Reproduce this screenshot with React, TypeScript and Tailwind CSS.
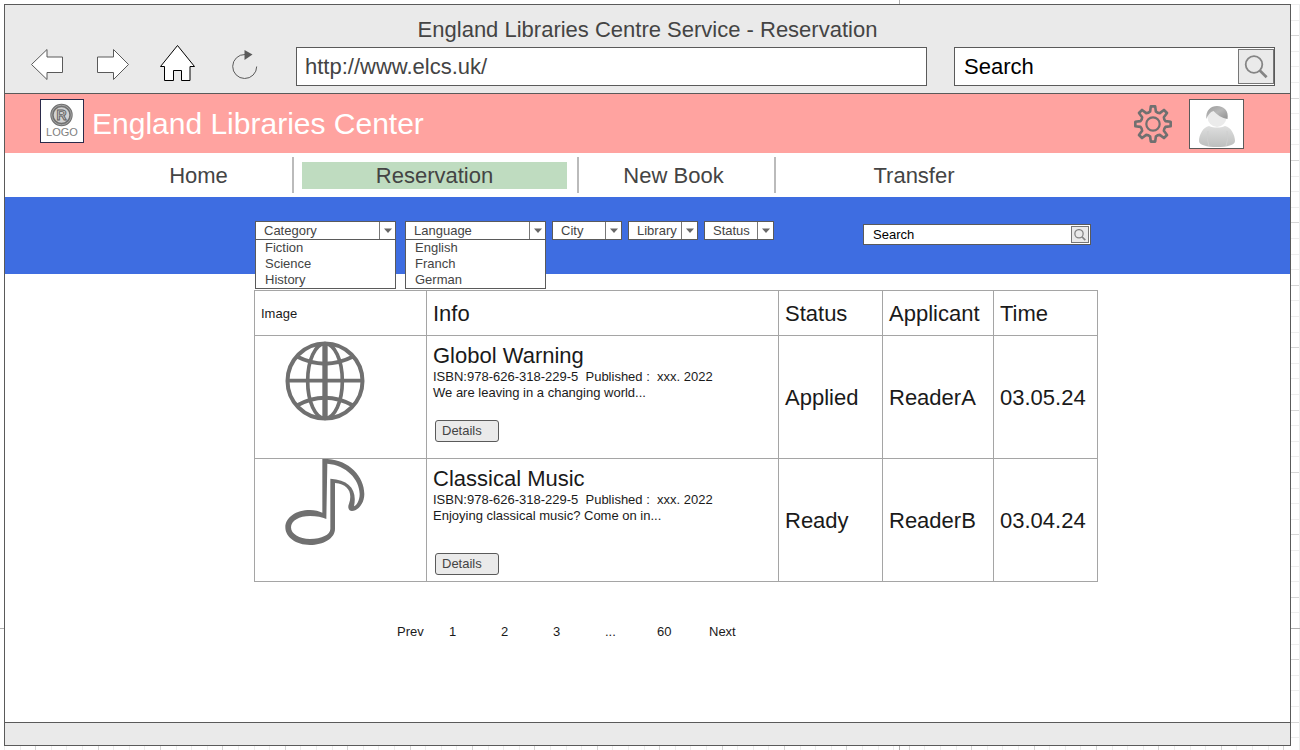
import React from "react";

const range = (n: number) => Array.from({ length: n }, (_, i) => i);

function GridBackdrop() {
  const step = 15.6;
  return (
    <svg className="absolute inset-0 -z-10 h-full w-full" aria-hidden="true" shapeRendering="crispEdges">
      {range(200).map((i) => {
        const at = Math.round(4 + i * step);
        const major = i % 4 === 2;
        const color = major ? "#d6d6d6" : "#ededed";
        return (
          <g key={i} fill={color}>
            <rect x="0" y={at} width="100%" height="1" />
            <rect x={at} y="0" width="1" height="100%" />
          </g>
        );
      })}
      <rect x="0" y="0" width="100%" height="4" fill="#fff" />
      <rect x="0" y="0" width="4" height="100%" fill="#fff" />
      <rect x="899" y="0" width="1" height="100%" fill="#b0b0b0" />
      <rect x="0" y="628" width="100%" height="1" fill="#b0b0b0" />
    </svg>
  );
}

function BackIcon() {
  return (
    <svg width="66" height="40" viewBox="15 47 66 40" fill="#fff" stroke="#5a5a5a" strokeWidth="1">
      <path d="M31.5 64.5 47 49.5V57H62.5V72.5H47V79.5Z" />
    </svg>
  );
}

function ForwardIcon() {
  return (
    <svg width="66" height="40" viewBox="81 47 66 40" fill="#fff" stroke="#5a5a5a" strokeWidth="1">
      <path d="M128.5 64.5 113.5 49.5V57H97.5V72.5H113.5V79.5Z" />
    </svg>
  );
}

function HomeIcon() {
  return (
    <svg width="66" height="40" viewBox="147 47 66 40" className="overflow-visible" fill="#fff" stroke="#000" strokeWidth="1">
      <path d="M177.5 45.5 194.5 66.5H190V80.5H181.5V70.5H173.5V80.5H164.5V66.5H160.5Z" />
    </svg>
  );
}

function ReloadIcon() {
  return (
    <svg width="66" height="40" viewBox="213 47 66 40" fill="none">
      <path d="M256.7 66.5A12 12 0 1 1 245 54.5" stroke="#5a5a5a" strokeWidth="1" />
      <path d="M244.5 50 252.5 54.5 244.5 60Z" fill="#5a5a5a" />
    </svg>
  );
}

function Magnifier({ className, weight = 1.5 }: { className: string; weight?: number }) {
  return (
    <svg className={className} viewBox="0 0 24 24" fill="none" stroke="#858585">
      <circle cx="10" cy="9.5" r="8.3" strokeWidth={weight} />
      <path d="M15.8 15.5 22.6 22.2" strokeWidth={weight + 0.9} />
    </svg>
  );
}

function Gear() {
  const point = (radius: number, degrees: number) => {
    const a = (degrees * Math.PI) / 180;
    return `${(20 + radius * Math.sin(a)).toFixed(2)} ${(20 - radius * Math.cos(a)).toFixed(2)}`;
  };
  const d = range(8)
    .map((i) => {
      const a = i * 45;
      return `${i ? "L" : "M"}${point(12.8, a - 13)}L${point(17.8, a - 7)}L${point(17.8, a + 7)}L${point(12.8, a + 13)}Q${point(11.8, a + 22.5)} ${point(12.8, a + 32)}`;
    })
    .join("");
  return (
    <svg width="40" height="40" viewBox="0 0 40 40" fill="none" stroke="#707070" strokeLinejoin="round">
      <path d={`${d}Z`} strokeWidth="2.6" />
      <circle cx="20" cy="20" r="6.7" strokeWidth="2.2" />
    </svg>
  );
}

function Avatar() {
  return (
    <svg width="53" height="48" viewBox="1190 100 53 48">
      <defs>
        <linearGradient id="body" x1="0" x2="0" y1="0" y2="1">
          <stop offset="0" stopColor="#dedede" />
          <stop offset="1" stopColor="#bdbfbe" />
        </linearGradient>
        <linearGradient id="hair" x1="0" x2="1" y1="0" y2="1">
          <stop offset="0" stopColor="#9a9a9a" />
          <stop offset="0.5" stopColor="#b8b8b8" />
          <stop offset="1" stopColor="#909090" />
        </linearGradient>
      </defs>
      <path d="M1209 126C1214 128 1220 128 1225 126C1231 127 1235 135 1235 141C1235 145 1227 147 1217 147C1207 147 1199 145 1199 141C1199 135 1203 127 1209 126Z" fill="url(#body)" />
      <path d="M1208 131Q1206 139 1209 146M1227 131Q1229 139 1226 146" stroke="#cfcfcf" fill="none" />
      <ellipse cx="1217" cy="117" rx="9.5" ry="10" fill="#ebebeb" />
      <path d="M1206.3 119C1205.5 110 1211 106 1217 106C1224 106 1229 111 1227.5 119C1222 118 1217 115 1213.5 111C1210 112 1208 115 1206.3 119Z" fill="url(#hair)" />
    </svg>
  );
}

function Logo() {
  return (
    <svg width="42" height="42" viewBox="41 100 42 42" fontFamily="'Liberation Sans', Arial, sans-serif" textAnchor="middle">
      <circle cx="61.5" cy="115" r="9.5" fill="#d2d2d2" stroke="#707070" strokeWidth="3.4" />
      <circle cx="61.5" cy="115" r="9.8" fill="none" stroke="#a5a5a5" strokeWidth="1" />
      <text x="61.5" y="120" fontSize="14" fontWeight="700" fill="#c8c8c8" stroke="#606060" strokeWidth="0.9">
        R
      </text>
      <text x="62" y="136" fontSize="11" fill="#808080">
        LOGO
      </text>
    </svg>
  );
}

function Globe() {
  return (
    <svg width="80" height="80" viewBox="107 31 240 240" fill="none" stroke="#707070">
      <circle cx="227" cy="151" r="112.5" strokeWidth="12" />
      <path d="M227 36V268" strokeWidth="16" />
      <path d="M112 150H342" strokeWidth="11" />
      <ellipse cx="227" cy="151" rx="52" ry="112" strokeWidth="11" />
      <path d="M141 77Q227 121 313 77M141 225Q227 177 313 225" strokeWidth="12" />
    </svg>
  );
}

function Note() {
  return (
    <svg width="80" height="87" viewBox="107 387 240 261" fill="#707070" fillRule="evenodd">
      <path d="M219 387H235C300 391 345 440 345 492C345 522 324 543 308 543C298 543 294 532 299 521C310 490 298 462 257 459V597C257 625 222 645 182 645C140 645 108 622 108 592C108 562 140 540 182 540C196 540 210 544 219 548ZM234 401C290 405 331 448 331 492C331 512 322 526 314 529C324 480 302 450 243 446V597C243 614 217 627 182 627C150 627 125 612 125 592C125 572 150 558 182 558C202 558 218 562 231 567Z" />
    </svg>
  );
}

function Dropdown({ label, options, wide = false, open = false }: { label: string; options: string[]; wide?: boolean; open?: boolean }) {
  return (
    <div className={wide ? "relative w-[141px]" : "relative w-[70px]"}>
      <select
        aria-label={label}
        className="block h-[19px] w-full appearance-none border border-[#5a5a5a] bg-white pl-2 text-[13px] leading-[17px] text-[#444] outline-none"
      >
        <option>{label}</option>
        {options.map((o) => (
          <option key={o}>{o}</option>
        ))}
      </select>
      <span className="pointer-events-none absolute top-px right-px flex h-[17px] w-4 items-center justify-center border-l border-[#777]">
        <svg width="10" height="6" viewBox="0 0 10 6">
          <path d="M1 0.5H9L5 5Z" fill="#666" />
        </svg>
      </span>
      {open && (
        <ul
          role="listbox"
          aria-label={`${label} options`}
          className="absolute top-[18px] left-0 z-10 w-full border border-[#5a5a5a] bg-white pl-[9px] text-[13px] leading-4 text-[#444]"
        >
          {options.map((o) => (
            <li key={o} role="option" aria-selected="false">
              {o}
            </li>
          ))}
        </ul>
      )}
    </div>
  );
}

const books = [
  { title: "Globol Warning", text: "We are leaving in a changing world...", icon: <Globe />, status: "Applied", who: "ReaderA", time: "03.05.24", pad: "pt-[5px]", gap: "mt-[19px]" },
  { title: "Classical Music", text: "Enjoying classical music? Come on in...", icon: <Note />, status: "Ready", who: "ReaderB", time: "03.04.24", pad: "pt-0", gap: "mt-[29px]" },
];

export default function App() {
  return (
    <div className="relative isolate flex min-h-screen flex-col bg-white pt-1 pr-[9px] pb-1 pl-1 font-['Liberation_Sans',Arial,sans-serif]">
      <GridBackdrop />
      <div className="flex flex-1 flex-col border border-[#5a5a5a] bg-white">
        <header className="border-b border-[#5a5a5a] bg-[#eaeaea] pt-3 pb-[7px] text-[#444]">
          <h1 className="text-center text-[22px] leading-[26px]">England Libraries Centre Service - Reservation</h1>
          <div className="mt-1 flex h-[39px] items-center pr-[15px] pl-[10px]">
            <button aria-label="Back"><BackIcon /></button>
            <button aria-label="Forward"><ForwardIcon /></button>
            <button aria-label="Home page"><HomeIcon /></button>
            <button aria-label="Reload"><ReloadIcon /></button>
            <input
              aria-label="Address"
              defaultValue="http://www.elcs.uk/"
              className="ml-[17px] h-full min-w-0 flex-1 border border-[#5a5a5a] bg-white px-2 text-[22px] outline-none"
            />
            <div className="ml-[27px] flex h-full w-[321px] items-center border border-[#5a5a5a] bg-white pl-[9px]">
              <input aria-label="Web search" defaultValue="Search" className="min-w-0 flex-1 text-[22px] text-black outline-none" />
              <button aria-label="Run web search" className="flex h-[35px] w-9 items-center justify-center border border-[#777] bg-[#eaeaea]">
                <Magnifier className="h-6 w-6" weight={1.8} />
              </button>
            </div>
          </div>
        </header>

        <div className="flex h-[59px] items-center bg-[#ffa3a0] pr-[46px] pl-[35px]">
          <div className="mt-[5px] self-start border border-[#2a2a4a] bg-white">
            <Logo />
          </div>
          <h2 className="ml-2 flex-1 text-[30px] leading-8 text-white">England Libraries Center</h2>
          <button aria-label="Settings"><Gear /></button>
          <button aria-label="Profile" className="ml-4 border border-[#5a5a5a] bg-white">
            <Avatar />
          </button>
        </div>

        <nav className="grid h-11 grid-cols-[100fr_187fr_287fr_195fr_278fr_238fr] items-center text-center text-[22px] leading-[27px] text-[#444]">
          <a href="#home" className="col-start-2">Home</a>
          <div className="flex h-9 items-center border-x-2 border-[#bbb] px-2">
            <a href="#reservation" aria-current="page" className="mr-0.5 flex-1 bg-[#bfdcc0]">Reservation</a>
          </div>
          <a href="#new-book" className="pr-1.5">New Book</a>
          <div className="flex h-9 items-center justify-center border-l-2 border-[#bbb]">
            <a href="#transfer">Transfer</a>
          </div>
        </nav>

        <div className="flex h-[77px] items-start bg-[#3e6de1] pt-6 pr-[199px] pl-[250px]">
          <Dropdown label="Category" options={["Fiction", "Science", "History"]} wide open />
          <div className="ml-[9px]">
            <Dropdown label="Language" options={["English", "Franch", "German"]} wide open />
          </div>
          <div className="ml-1.5 flex gap-1.5">
            <Dropdown label="City" options={[]} />
            <Dropdown label="Library" options={[]} />
            <Dropdown label="Status" options={[]} />
          </div>
          <div className="mt-[3px] ml-auto flex h-[21px] w-[228px] items-center border border-[#5a5a5a] bg-white pr-px pl-[9px]">
            <input aria-label="Search books" defaultValue="Search" className="min-w-0 flex-1 text-[13px] leading-4 text-black outline-none" />
            <button aria-label="Run book search" className="flex h-[17px] w-[18px] items-center justify-center border border-[#777] bg-[#eaeaea]">
              <Magnifier className="h-3 w-3" weight={2.6} />
            </button>
          </div>
        </div>

        <main className="mt-4 mr-[192px] mb-8 ml-[249px]">
          <table className="w-full table-fixed border-collapse text-left text-[22px] leading-[26px] text-[#1a1a1a]">
            <colgroup>
              <col className="w-[172px]" />
              <col />
              <col className="w-[104px]" />
              <col className="w-[111px]" />
              <col className="w-[104px]" />
            </colgroup>
            <thead>
              <tr className="h-[45px]">
                <th className="border border-[#a5a5a5] px-1.5 pt-0.5 text-[13px] font-normal">Image</th>
                {["Info", "Status", "Applicant", "Time"].map((h) => (
                  <th key={h} className="border border-[#a5a5a5] px-1.5 pt-0.5 font-normal">{h}</th>
                ))}
              </tr>
            </thead>
            <tbody>
              {books.map((b) => (
                <tr key={b.title} className="h-[123px]">
                  <td className={`border border-[#a5a5a5] pl-[30px] align-top ${b.pad}`}>{b.icon}</td>
                  <td className="border border-[#a5a5a5] px-1.5 pt-[7px] align-top">
                    <h3>{b.title}</h3>
                    <div className="text-[13px] leading-4">
                      <p className="whitespace-pre">{"ISBN:978-626-318-229-5  Published :  xxx. 2022"}</p>
                      <p>{b.text}</p>
                      <button className={`ml-0.5 block h-[22px] w-16 rounded-[3px] border border-[#5a5a5a] bg-[#eaeaea] pl-1.5 text-left text-[#444] ${b.gap}`}>
                        Details
                      </button>
                    </div>
                  </td>
                  <td className="border border-[#a5a5a5] px-1.5 pt-0.5">{b.status}</td>
                  <td className="border border-[#a5a5a5] px-1.5 pt-0.5">{b.who}</td>
                  <td className="border border-[#a5a5a5] px-1.5 pt-0.5">{b.time}</td>
                </tr>
              ))}
            </tbody>
          </table>

          <nav aria-label="Pages" className="mt-10 ml-[143px] flex text-[13px] leading-5 text-[#1a1a1a]">
            {["Prev", "1", "2", "3", "...", "60", "Next"].map((p) => (
              <a key={p} href="#page" className="w-[52px]">{p}</a>
            ))}
          </nav>
        </main>

        <footer className="mt-auto h-[23px] border-t border-[#5a5a5a] bg-[#eaeaea]" />
      </div>
    </div>
  );
}
